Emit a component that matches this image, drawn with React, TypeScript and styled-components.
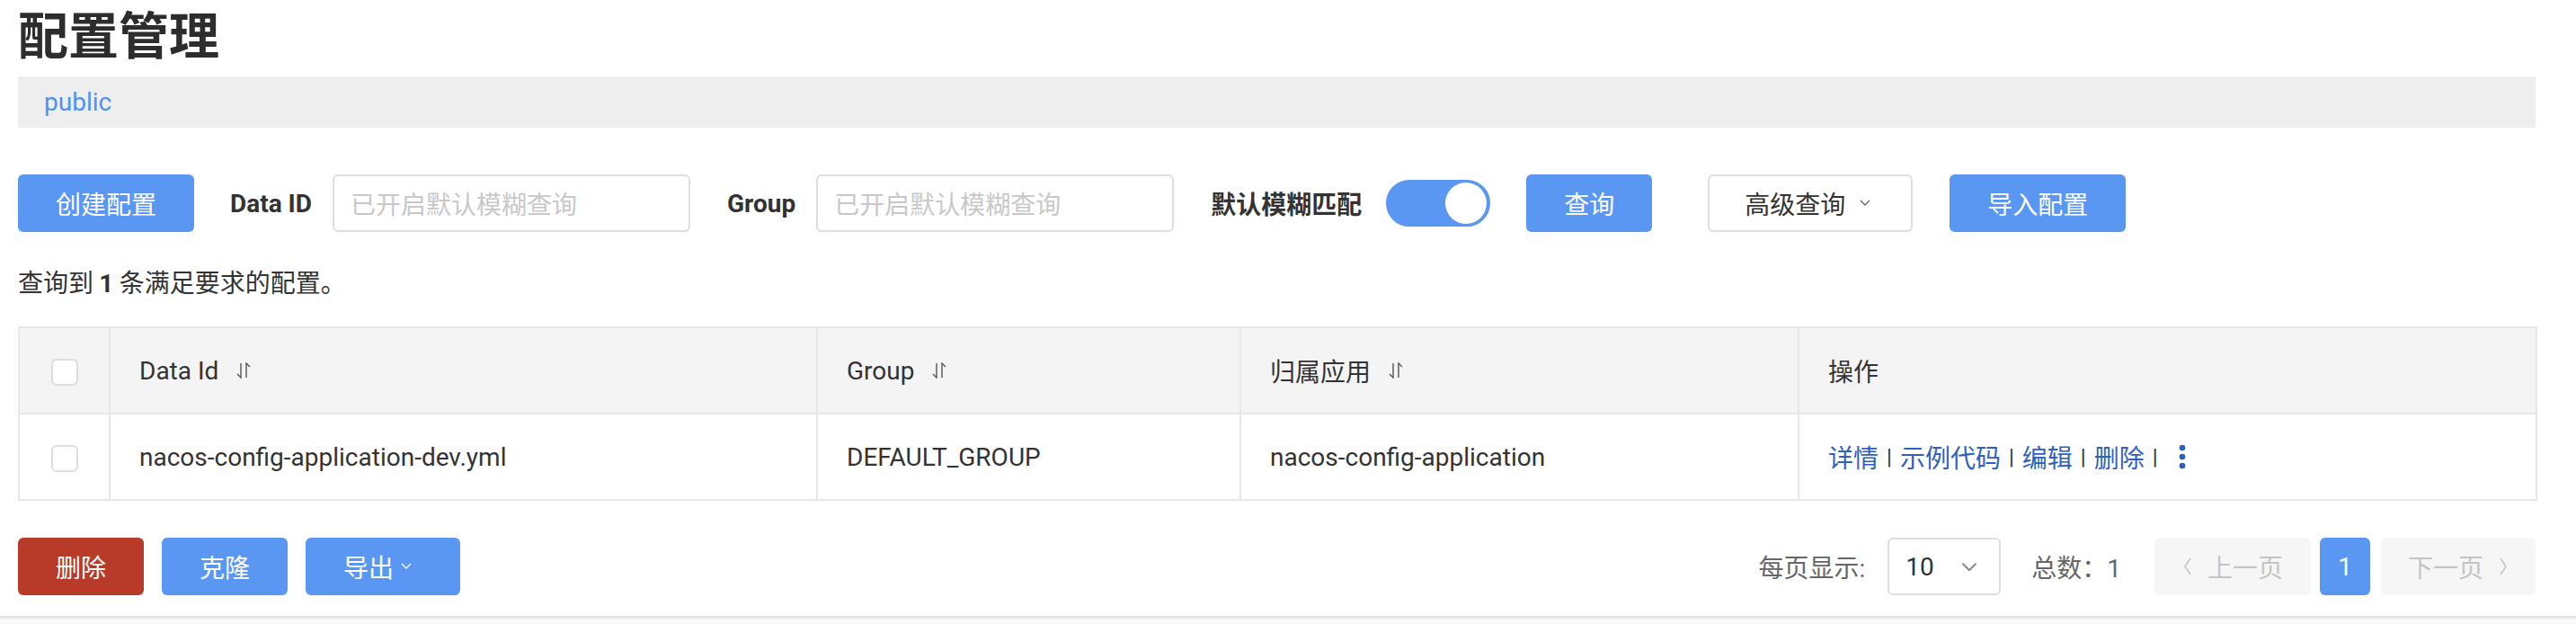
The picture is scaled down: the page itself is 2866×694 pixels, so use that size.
import React from "react";
import styled, { createGlobalStyle } from "styled-components";

const GlobalStyle = createGlobalStyle`
  html, body { margin: 0; padding: 0; background: #fff; }
  body {
    font-family: Roboto, "Noto Sans CJK SC", "Noto Sans", sans-serif;
    color: #333;
    font-size: 28px;
  }
  * { box-sizing: border-box; }
`;

const PRIMARY = "#5a97f2";
const LINK = "#2f5fc0";
const BORDER = "#e6e7eb";

const Page = styled.div`
  padding-left: 20px;
  width: 2821px;
  display: flex;
  flex-direction: column;
`;

const Title = styled.h1`
  margin: 0;
  padding-top: 3px;
  font-size: 56px;
  line-height: 66px;
  font-weight: 700;
  color: #2d2d2d;
  font-family: "Noto Sans CJK SC", sans-serif;
`;

const NamespaceBar = styled.div`
  margin-top: 16px;
  height: 57px;
  background: #eeeeee;
  display: flex;
  align-items: center;
  padding-left: 29px;
`;

const NamespaceLink = styled.span`
  color: #4a94f0;
  font-size: 28px;
  line-height: 1;
  font-family: Roboto, sans-serif;
`;

const Toolbar = styled.div`
  margin-top: 52px;
  height: 64px;
  display: flex;
  align-items: center;
`;

const Button = styled.button<{ $tone?: "primary" | "danger"; $pr?: number }>`
  height: 64px;
  padding: 0 ${(p) => p.$pr ?? 42}px 0 42px;
  border: none;
  border-radius: 6px;
  font-size: 28px;
  font-family: "Noto Sans CJK SC", sans-serif;
  color: #fff;
  background: ${(p) => (p.$tone === "danger" ? "#b83b2a" : PRIMARY)};
  display: inline-flex;
  align-items: center;
  gap: 8px;
  cursor: pointer;
  flex-shrink: 0;
`;

const FormItem = styled.div<{ $ml: number; $gap?: number }>`
  display: flex;
  align-items: center;
  gap: ${(p) => p.$gap ?? 23}px;
  margin-left: ${(p) => p.$ml}px;
`;

const FieldLabel = styled.label`
  font-size: 28px;
  font-weight: 700;
  color: #333;
  white-space: nowrap;
`;

const TextInput = styled.input`
  width: 398px;
  height: 64px;
  border: 2px solid #dcdee3;
  border-radius: 6px;
  padding: 0 18px;
  font-size: 28px;
  font-family: "Noto Sans CJK SC", sans-serif;
  color: #333;
  outline: none;
  &::placeholder { color: #c8c8c8; }
`;

const Switch = styled.div`
  width: 116px;
  height: 52px;
  border-radius: 26px;
  background: ${PRIMARY};
  border: 3px solid ${PRIMARY};
  display: flex;
  justify-content: flex-end;
  align-items: center;
  padding-right: 1px;
`;

const Knob = styled.div`
  width: 46px;
  height: 46px;
  border-radius: 50%;
  background: #fff;
`;

const Spacer = styled.div<{ $w: number }>`
  width: ${(p) => p.$w}px;
  flex-shrink: 0;
`;

const SelectBox = styled.div<{ $w: number; $pl: number; $gap: number }>`
  width: ${(p) => p.$w}px;
  height: 64px;
  border: 2px solid #dcdee3;
  border-radius: 6px;
  background: #fff;
  display: flex;
  align-items: center;
  padding-left: ${(p) => p.$pl}px;
  gap: ${(p) => p.$gap}px;
  font-size: 28px;
  color: #333;
  flex-shrink: 0;
`;

const CjkText = styled.span`
  font-family: "Noto Sans CJK SC", sans-serif;
`;

const Summary = styled.div`
  margin-top: 35px;
  font-size: 28px;
  line-height: 40px;
  color: #333;
  font-family: "Noto Sans CJK SC", sans-serif;
  b { font-family: Roboto, sans-serif; font-weight: 700; }
`;

const Table = styled.table`
  margin-top: 27px;
  width: 2801px;
  border-collapse: collapse;
  table-layout: fixed;
  border: 2px solid ${BORDER};
`;

const HeadCell = styled.th<{ $center?: boolean }>`
  height: 96px;
  background: #f4f4f4;
  border: 2px solid ${BORDER};
  text-align: ${(p) => (p.$center ? "center" : "left")};
  padding: 0 ${(p) => (p.$center ? 0 : 32)}px;
  font-weight: 400;
  font-size: 28px;
  color: #333;
`;

const BodyCell = styled.td<{ $center?: boolean }>`
  height: 96px;
  border: 2px solid ${BORDER};
  text-align: ${(p) => (p.$center ? "center" : "left")};
  padding: 0 ${(p) => (p.$center ? 0 : 32)}px;
  font-size: 28px;
  color: #333;
`;

const HeadInner = styled.span`
  display: inline-flex;
  align-items: center;
  gap: 18px;
`;

const Checkbox = styled.span`
  display: inline-block;
  width: 30px;
  height: 30px;
  border: 2px solid #dedede;
  border-radius: 6px;
  background: #fff;
  vertical-align: middle;
`;

const Ops = styled.div`
  display: flex;
  align-items: center;
  font-family: "Noto Sans CJK SC", sans-serif;
`;

const OpLink = styled.a`
  color: ${LINK};
  text-decoration: none;
  font-size: 28px;
`;

const Sep = styled.span`
  color: #333;
  margin: 0 9px;
  font-size: 24px;
  font-family: Roboto, sans-serif;
`;

const MoreWrap = styled.span`
  margin-left: 14px;
  display: flex;
`;

const Footer = styled.div`
  margin-top: 41px;
  width: 2801px;
  height: 64px;
  display: flex;
  justify-content: space-between;
  align-items: center;
`;

const ActionGroup = styled.div`
  display: flex;
  gap: 20px;
`;

const Pagination = styled.div`
  display: flex;
  align-items: center;
`;

const PagerText = styled.span<{ $ml?: number }>`
  color: #666;
  font-size: 28px;
  margin-left: ${(p) => p.$ml ?? 0}px;
  font-family: Roboto, "Noto Sans CJK SC", sans-serif;
`;

const PageSize = styled(SelectBox)`
  margin-left: 25px;
`;

const PageBtn = styled.div<{ $w: number; $active?: boolean; $ml: number }>`
  width: ${(p) => p.$w}px;
  height: 64px;
  margin-left: ${(p) => p.$ml}px;
  border-radius: 6px;
  background: ${(p) => (p.$active ? PRIMARY : "#f6f6f6")};
  color: ${(p) => (p.$active ? "#fff" : "#c4c4c4")};
  display: flex;
  align-items: center;
  justify-content: center;
  gap: 16px;
  font-size: 28px;
  font-family: Roboto, "Noto Sans CJK SC", sans-serif;
`;

const BottomBar = styled.div`
  margin-top: 23px;
  height: 40px;
  border-top: 3px solid #e6e6e6;
  background: #fafafa;
  margin-left: -20px;
  width: 2866px;
`;

const Chevron = ({ color, size = 12 }: { color: string; size?: number }) => (
  <svg width={size} height={size * 0.6} viewBox="0 0 12 7" fill="none">
    <path d="M1 1 L6 6 L11 1" stroke={color} strokeWidth="1.4" />
  </svg>
);

const SideArrow = ({ dir }: { dir: "left" | "right" }) => (
  <svg width="12" height="22" viewBox="0 0 12 22" fill="none">
    <path
      d={dir === "left" ? "M9 2 L3 11 L9 20" : "M3 2 L9 11 L3 20"}
      stroke="#c4c4c4"
      strokeWidth="1.6"
    />
  </svg>
);

const SortIcon = () => (
  <svg width="20" height="18" viewBox="0 0 20 18" fill="none">
    <path d="M7 1 V17 L3 13" stroke="#555" strokeWidth="1.4" />
    <path d="M13 17 V1 L17 5" stroke="#555" strokeWidth="1.4" />
  </svg>
);

const MoreIcon = () => (
  <svg width="8" height="30" viewBox="0 0 8 30">
    <circle cx="4" cy="5" r="3.3" fill={LINK} />
    <circle cx="4" cy="15" r="3.3" fill={LINK} />
    <circle cx="4" cy="25" r="3.3" fill={LINK} />
  </svg>
);

const columns = [
  { key: "check", width: 101 },
  { key: "id", width: 787 },
  { key: "group", width: 471 },
  { key: "app", width: 621 },
  { key: "ops", width: 821 },
];

const rows = [
  {
    id: "nacos-config-application-dev.yml",
    group: "DEFAULT_GROUP",
    app: "nacos-config-application",
  },
];

export default function App() {
  return (
    <>
      <GlobalStyle />
      <Page>
        <Title>配置管理</Title>
        <NamespaceBar>
          <NamespaceLink>public</NamespaceLink>
        </NamespaceBar>

        <Toolbar>
          <Button $tone="primary">创建配置</Button>
          <FormItem $ml={40}>
            <FieldLabel>Data ID</FieldLabel>
            <TextInput placeholder="已开启默认模糊查询" />
          </FormItem>
          <FormItem $ml={41}>
            <FieldLabel>Group</FieldLabel>
            <TextInput placeholder="已开启默认模糊查询" />
          </FormItem>
          <FormItem $ml={41} $gap={27}>
            <FieldLabel>默认模糊匹配</FieldLabel>
            <Switch>
              <Knob />
            </Switch>
          </FormItem>
          <Spacer $w={40} />
          <Button $tone="primary">查询</Button>
          <Spacer $w={62} />
          <SelectBox $w={228} $pl={39} $gap={16}>
            <CjkText>高级查询</CjkText>
            <Chevron color="#666" />
          </SelectBox>
          <Spacer $w={41} />
          <Button $tone="primary">导入配置</Button>
        </Toolbar>

        <Summary>
          查询到 <b>1</b> 条满足要求的配置。
        </Summary>

        <Table>
          <colgroup>
            {columns.map((c) => (
              <col key={c.key} style={{ width: c.width }} />
            ))}
          </colgroup>
          <thead>
            <tr>
              <HeadCell $center>
                <Checkbox />
              </HeadCell>
              <HeadCell>
                <HeadInner>
                  Data Id <SortIcon />
                </HeadInner>
              </HeadCell>
              <HeadCell>
                <HeadInner>
                  Group <SortIcon />
                </HeadInner>
              </HeadCell>
              <HeadCell>
                <HeadInner>
                  <CjkText>归属应用</CjkText>
                  <SortIcon />
                </HeadInner>
              </HeadCell>
              <HeadCell>
                <CjkText>操作</CjkText>
              </HeadCell>
            </tr>
          </thead>
          <tbody>
            {rows.map((r) => (
              <tr key={r.id}>
                <BodyCell $center>
                  <Checkbox />
                </BodyCell>
                <BodyCell>{r.id}</BodyCell>
                <BodyCell>{r.group}</BodyCell>
                <BodyCell>{r.app}</BodyCell>
                <BodyCell>
                  <Ops>
                    <OpLink>详情</OpLink>
                    <Sep>|</Sep>
                    <OpLink>示例代码</OpLink>
                    <Sep>|</Sep>
                    <OpLink>编辑</OpLink>
                    <Sep>|</Sep>
                    <OpLink>删除</OpLink>
                    <Sep>|</Sep>
                    <MoreWrap>
                      <MoreIcon />
                    </MoreWrap>
                  </Ops>
                </BodyCell>
              </tr>
            ))}
          </tbody>
        </Table>

        <Footer>
          <ActionGroup>
            <Button $tone="danger">删除</Button>
            <Button $tone="primary">克隆</Button>
            <Button $tone="primary" $pr={54}>
              导出
              <Chevron color="#fff" />
            </Button>
          </ActionGroup>
          <Pagination>
            <PagerText>每页显示:</PagerText>
            <PageSize $w={126} $pl={18} $gap={30}>
              <span>10</span>
              <Chevron color="#888" size={18} />
            </PageSize>
            <PagerText $ml={34}>总数：1</PagerText>
            <PageBtn $w={174} $ml={37}>
              <SideArrow dir="left" />
              <span>上一页</span>
            </PageBtn>
            <PageBtn $w={56} $ml={10} $active>
              1
            </PageBtn>
            <PageBtn $w={172} $ml={12}>
              <span>下一页</span>
              <SideArrow dir="right" />
            </PageBtn>
          </Pagination>
        </Footer>
        <BottomBar />
      </Page>
    </>
  );
}
